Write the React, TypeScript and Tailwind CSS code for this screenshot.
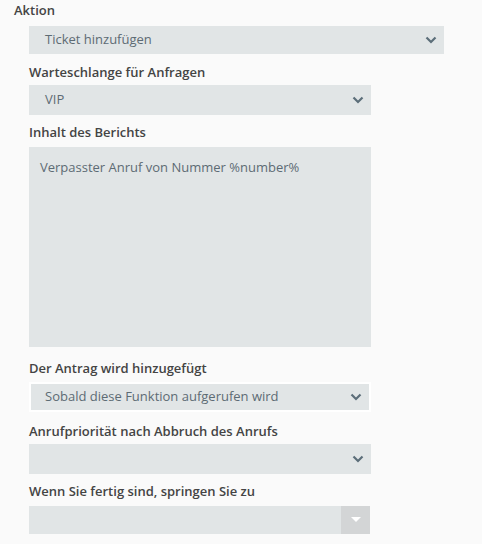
import { ReactNode } from "react";

function Chevron() {
  return (
    <svg width="12" height="8" viewBox="0 0 12 8" className="text-[#5c6e79]">
      <path d="M1.5 1.5 L6 6 L10.5 1.5" fill="none" stroke="currentColor" strokeWidth="2.2" />
    </svg>
  );
}

function Select({ value, className = "" }: { value?: string; className?: string }) {
  return (
    <div className={`flex items-center justify-between bg-[#e1e5e6] pl-4 pr-[7px] text-[13px] text-[#5d6b74] ${className}`}>
      <span>{value}</span>
      <Chevron />
    </div>
  );
}

function Label({ children, className = "" }: { children: ReactNode; className?: string }) {
  return <div className={`h-[18px] leading-[18px] text-[13px] font-semibold text-[#444] ${className}`}>{children}</div>;
}

export default function App() {
  return (
    <div className="w-[482px] h-[544px] bg-[#fafafa] overflow-hidden" style={{ fontFamily: '"Open Sans", sans-serif' }}>
      <Label className="mt-px ml-[14px]">Aktion</Label>

      <div className="ml-[29px]">
        <Select value="Ticket hinzufügen" className="mt-[7px] w-[415px] h-[28px]" />

        <Label className="mt-[9px]">Warteschlange für Anfragen</Label>
        <Select value="VIP" className="mt-1 w-[342px] h-[30px]" />

        <Label className="mt-2">Inhalt des Berichts</Label>
        <div className="mt-[6px] w-[342px] h-[200px] bg-[#e1e5e6] pl-[11px] pt-[11px] text-[13px] leading-[18px] text-[#5d6b74]">
          Verpasster Anruf von Nummer %number%
        </div>

        <Label className="mt-3">Der Antrag wird hinzugefügt</Label>
        <div className="mt-[5px] w-[342px] h-[30px] border-2 border-white">
          <Select value="Sobald diese Funktion aufgerufen wird" className="h-full pl-[14px] pr-[5px]" />
        </div>

        <Label className="mt-[10px]">Anrufpriorität nach Abbruch des Anrufs</Label>
        <Select className="mt-1 w-[342px] h-[30px]" />

        <Label className="mt-2">Wenn Sie fertig sind, springen Sie zu</Label>
        <div className="mt-[6px] flex w-[341px] h-[28px] bg-[#e1e5e6]">
          <div className="flex-1" />
          <div className="w-[29px] flex items-center justify-center bg-[#d3d5d6]">
            <svg width="10" height="6" viewBox="0 0 10 6">
              <path d="M0 0 L10 0 L5 5 Z" fill="#ffffff" />
            </svg>
          </div>
        </div>
      </div>
    </div>
  );
}
